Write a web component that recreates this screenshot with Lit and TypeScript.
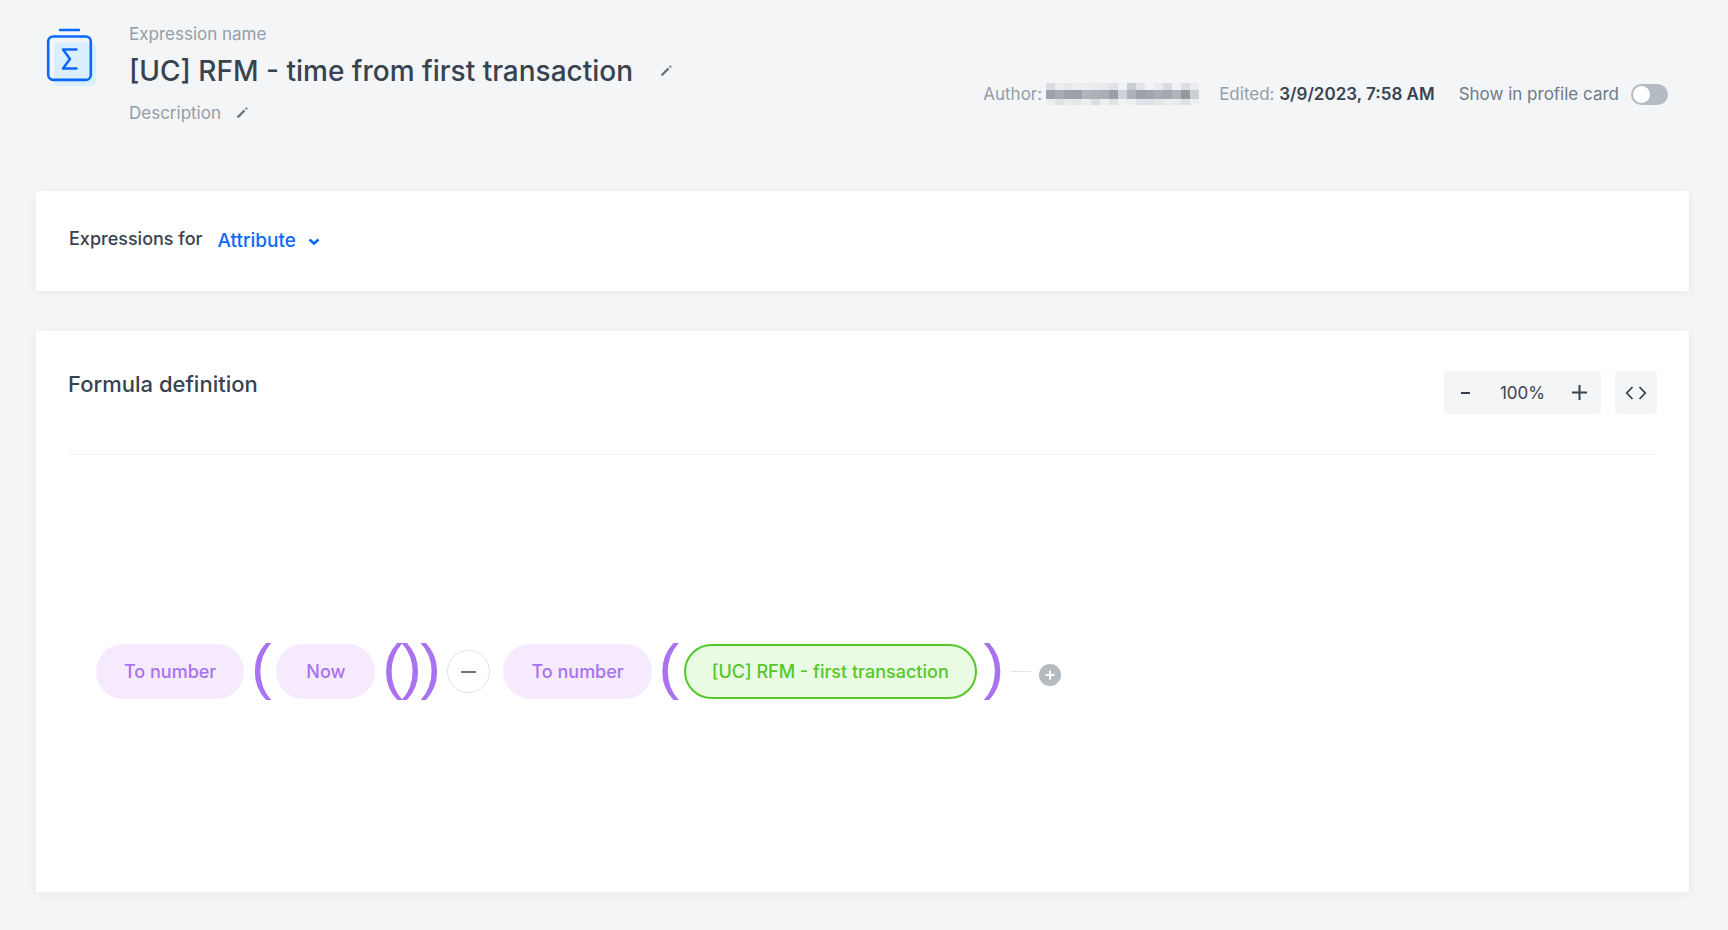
import { LitElement, html, css, svg } from "lit";
import { customElement, state } from "lit/decorators.js";

const MOSAIC = [
  ["#dadce0", "#eceef0", "#e6e8ea", "#eceef0", "#eceef0", "#e9ebed", "#e6e8ea", "#dfe1e4", "#f0f1f3", "#c9ccd1", "#e2e4e7", "#f1f2f4", "#e9ebed", "#d9dbdf", "#f1f2f4", "#dcdee2", "#eaecee"],
  ["#9ca1aa", "#a7abb3", "#9ca1a9", "#9ca1a9", "#b1b4bb", "#aeb1b9", "#a9adb5", "#989da7", "#cfd2d6", "#adb1b9", "#9ca1aa", "#a0a4ad", "#a8acb4", "#a3a7af", "#b0b3ba", "#9398a1", "#cbced3"],
  ["#edeff1", "#e0e2e5", "#e9ebed", "#e6e8ea", "#edeff1", "#dcdee1", "#edeff1", "#e0e2e5", "#f1f2f4", "#edeff1", "#e0e2e5", "#e0e2e5", "#e2e4e7", "#e9ebed", "#e9ebed", "#dfe1e4", "#edeff1"],
];
const ROWS = [[0, 7], [7, 9], [16, 6]];

const pencil = svg`<path d="M1.6 10.4 8.600 3.400" stroke="#6a7580" stroke-width="2.2" /><path d="m9.800 2.200 1.200-1.200" stroke="#6a7580" stroke-width="2.2" />`;

@customElement("app-root")
export class AppRoot extends LitElement {
  static styles = css`
    :host {
      display: block;
      box-sizing: border-box;
      min-height: 100vh;
      padding: 22px 39px 38px 36px;
      background: #f3f5f7;
      color: #384350;
      font-family: Inter, "Liberation Sans", sans-serif;
      font-size: 17px;
      line-height: 24px;
    }
    *, *::before { box-sizing: border-box; }
    button, select { font: inherit; color: inherit; border: 0; padding: 0; background: none; cursor: pointer; }
    svg { display: block; flex: none; }
    header { display: flex; justify-content: space-between; padding: 0 21px 0 10px; min-height: 169px; }
    .intro { display: flex; gap: 32px; }
    .logo { margin-top: 5px; }
    .label { color: #949ea8; display: flex; align-items: center; gap: 15px; }
    .title { display: flex; align-items: center; gap: 27px; margin: 7px 0 12px; }
    h1 { margin: 0; font-size: 28px; line-height: 36px; font-weight: 500; }
    .meta { display: flex; align-items: center; height: 24px; margin-top: 60px; color: #949ea8; }
    .meta strong { font-weight: 600; color: #384350; }
    .author { display: flex; align-items: center; gap: 4px; margin-right: 20px; }
    .edited { margin-right: 24px; }
    .toggle { display: flex; align-items: center; gap: 12px; color: #6f7b87; }
    .toggle input { appearance: none; margin: 0; width: 37px; height: 21px; padding: 2px; border-radius: 11px; background: #b4bbc2; display: flex; cursor: pointer; }
    .toggle input::before { content: ""; width: 17px; height: 17px; border-radius: 50%; background: #fff; }
    .toggle input:checked { background: #0b68ff; justify-content: flex-end; }
    .card { background: #fff; box-shadow: 0 2px 8px rgba(35, 41, 54, 0.06); }
    .scope { display: flex; align-items: flex-start; gap: 15px; padding: 36px 33px 38px; font-size: 18px; font-weight: 500; min-height: 100px; }
    .picker { display: flex; align-items: center; gap: 11px; padding-top: 2px; color: #0b68ff; }
    .picker select { appearance: none; font-size: 19px; line-height: 24px; font-weight: 500; }
    .formula { margin-top: 40px; min-height: 561px; padding: 40px 32px; }
    .bar { display: flex; justify-content: space-between; align-items: flex-start; padding-bottom: 40px; border-bottom: 1px solid #f1f3f5; }
    h2 { margin: 0; font-size: 22px; line-height: 26px; font-weight: 500; }
    .tools { display: flex; gap: 14px; }
    .zoom, .code { display: flex; align-items: center; height: 43px; border-radius: 4px; background: #f3f5f7; }
    .zoom button { width: 43px; height: 43px; display: grid; place-items: center; }
    .zoom output { width: 71px; text-align: center; }
    .code { width: 42px; justify-content: center; }
    .flow { display: flex; align-items: center; padding: 183px 28px 0; font-size: 18px; font-weight: 500; }
    .pill { flex: none; height: 55px; padding: 0 28px; border-radius: 28px; background: #f6eaff; color: #a872ee; white-space: nowrap; }
    .now { padding: 0 30px; }
    .attr { background: #eafbe3; color: #55c729; border: 2px solid #55c729; padding: 0 26px; }
    .paren { width: 18px; padding-bottom: 12px; display: flex; justify-content: center; color: #a872f0; font-family: "Liberation Sans", sans-serif; font-size: 62px; line-height: 55px; font-weight: 400; }
    .open { margin: 0 6px 0 8px; }
    .tail { display: flex; gap: 1px; margin: 0 8px; }
    .op { flex: none; width: 43px; height: 43px; margin-right: 13px; border: 1px solid #dfe2e5; border-radius: 50%; display: grid; place-items: center; }
    .line { width: 20px; height: 1px; background: #e3e6e8; }
    .add { margin: 7px 0 0 8px; }
  `;

  @state() private zoom = 100;

  render() {
    return html`
      <header>
        <div class="intro">
          <svg class="logo" width="51" height="60" viewBox="0 0 51 60" fill="none">
            <rect x="8" y="15.500" width="42" height="43.500" rx="5" fill="#d9eeff" />
            <rect x="2.2" y="9.500" width="42.6" height="43.4" rx="5" stroke="#0b68ff" stroke-width="2.6" />
            <path d="M14 3h19M30.500 22.500H17l7 9.500-7 9.500h13.500" stroke="#0b68ff" stroke-width="2.500" stroke-linecap="round" stroke-linejoin="round" />
          </svg>
          <div>
            <div class="label">Expression name</div>
            <div class="title">
              <h1>[UC] RFM - time from first transaction</h1>
              <button aria-label="Edit name"><svg width="12" height="12" viewBox="0 0 12 12">${pencil}</svg></button>
            </div>
            <div class="label">Description
              <button aria-label="Edit description"><svg width="12" height="12" viewBox="0 0 12 12">${pencil}</svg></button>
            </div>
          </div>
        </div>
        <div class="meta">
          <div class="author">Author:
            <svg width="153" height="22" shape-rendering="crispEdges" role="img" aria-label="Hidden author">
              ${MOSAIC.map((row, r) => row.map((c, i) => svg`<rect x=${i * 9} y=${ROWS[r][0]} width="9" height=${ROWS[r][1]} fill=${c} />`))}
            </svg>
          </div>
          <div class="edited">Edited: <strong>3/9/2023, 7:58 AM</strong></div>
          <label class="toggle">Show in profile card <input type="checkbox" role="switch" /></label>
        </div>
      </header>

      <section class="card scope">
        <label for="scope">Expressions for</label>
        <div class="picker">
          <select id="scope"><option>Attribute</option></select>
          <svg width="12" height="10" viewBox="0 0 12 10" fill="none"><path d="m1.500 3.500 4.500 4 4.500-4" stroke="#0b68ff" stroke-width="2.500" /></svg>
        </div>
      </section>

      <section class="card formula">
        <div class="bar">
          <h2>Formula definition</h2>
          <div class="tools">
            <div class="zoom">
              <button aria-label="Zoom out" @click=${() => (this.zoom -= 10)}><svg width="9" height="2"><path d="M0 1h9" stroke="#384350" stroke-width="2" /></svg></button>
              <output>${this.zoom}%</output>
              <button aria-label="Zoom in" @click=${() => (this.zoom += 10)}><svg width="15" height="15"><path d="M0 7.500h15M7.500 0v15" stroke="#384350" stroke-width="2" /></svg></button>
            </div>
            <button class="code" aria-label="Show code"><svg width="22" height="14" fill="none"><path d="M7.500 1 1.800 7l5.700 6M14.500 1l5.700 6-5.700 6" stroke="#384350" stroke-width="1.800" /></svg></button>
          </div>
        </div>
        <div class="flow">
          <button class="pill">To number</button>
          <span class="paren open">(</span>
          <button class="pill now">Now</button>
          <span class="tail"><span class="paren">(</span><span class="paren">)</span><span class="paren">)</span></span>
          <button class="op" aria-label="Minus"><svg width="15" height="2"><path d="M0 1h15" stroke="#6a7580" stroke-width="2" /></svg></button>
          <button class="pill">To number</button>
          <span class="paren open">(</span>
          <button class="pill attr">[UC] RFM - first transaction</button>
          <span class="tail"><span class="paren">)</span></span>
          <span class="line"></span>
          <button class="add" aria-label="Add element"><svg width="22" height="22"><circle cx="11" cy="11" r="11" fill="#b4bbc0" /><path d="M6.500 11h9M11 6.500v9" stroke="#fff" stroke-width="2" /></svg></button>
        </div>
      </section>
    `;
  }
}
